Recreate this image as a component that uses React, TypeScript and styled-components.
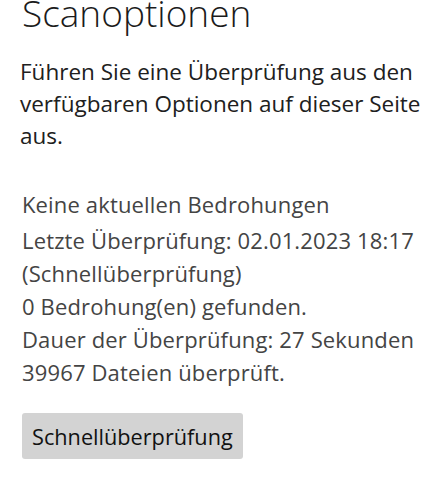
import React from "react";
import styled, { createGlobalStyle } from "styled-components";

const Global = createGlobalStyle`
  html, body { margin: 0; padding: 0; background: #ffffff; }
  body { font-family: "Open Sans", "Noto Sans", "Liberation Sans", sans-serif; }
`;

const Page = styled.main`
  display: flex;
  flex-direction: column;
  padding: 0 10px 0 20px;
  width: 442px;
  box-sizing: border-box;
`;

const Title = styled.h1`
  margin: -11px 0 0 2px;
  font-size: 37px;
  font-weight: 300;
  line-height: 48px;
  color: #1b1b1b;
`;

const Description = styled.p`
  margin: 19px 0 0 0;
  font-size: 22.5px;
  line-height: 32px;
  color: #202020;
`;

const Status = styled.section`
  display: flex;
  flex-direction: column;
  margin: 36px 0 0 2px;
  color: #444444;
  font-size: 22px;
  letter-spacing: 0.15px;
`;

const StatusHeading = styled.div`
  line-height: 33px;
  margin-bottom: 3px;
`;

const StatusLine = styled.div`
  line-height: 33px;
`;

const Button = styled.button`
  align-self: flex-start;
  margin: 24px 0 0 2px;
  height: 46px;
  padding: 0 10px;
  border: none;
  border-radius: 3px;
  background: #d3d3d3;
  color: #111111;
  font-family: inherit;
  font-size: 21.7px;
`;

export default function App() {
  return (
    <>
      <Global />
      <Page>
        <Title>Scanoptionen</Title>
        <Description>
          Führen Sie eine Überprüfung aus den verfügbaren Optionen auf dieser Seite aus.
        </Description>
        <Status>
          <StatusHeading>Keine aktuellen Bedrohungen</StatusHeading>
          <StatusLine>Letzte Überprüfung: 02.01.2023 18:17 (Schnellüberprüfung)</StatusLine>
          <StatusLine>0 Bedrohung(en) gefunden.</StatusLine>
          <StatusLine>Dauer der Überprüfung: 27 Sekunden</StatusLine>
          <StatusLine>39967 Dateien überprüft.</StatusLine>
        </Status>
        <Button>Schnellüberprüfung</Button>
      </Page>
    </>
  );
}
